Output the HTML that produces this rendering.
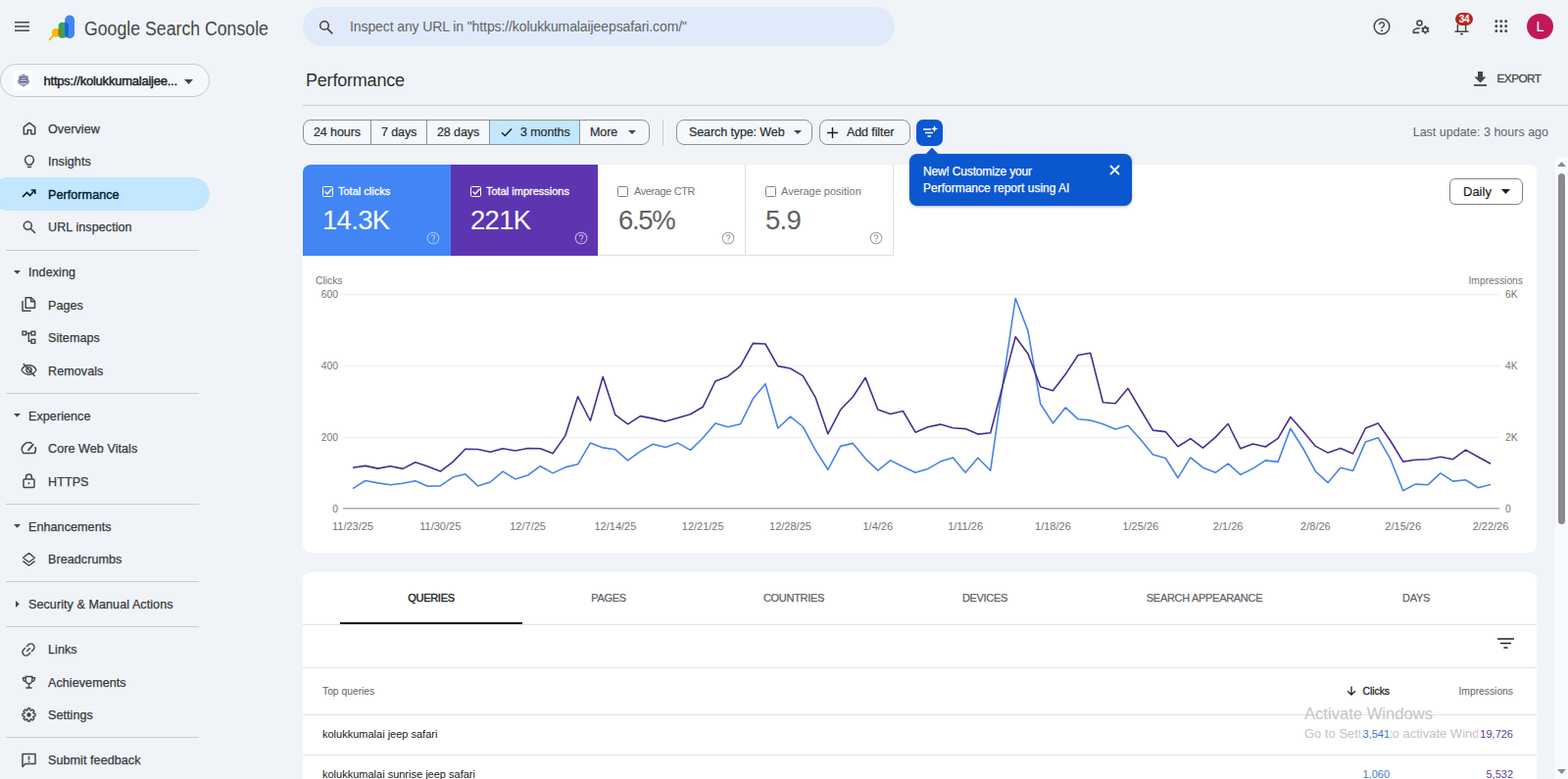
<!DOCTYPE html>
<html lang="en">
<head>
<meta charset="utf-8">
<title>Performance - Google Search Console</title>
<style>
*{box-sizing:border-box;margin:0;padding:0}
html,body{width:1600px;height:795px;overflow:hidden}
body{background:#f0f4f9;font-family:"Liberation Sans",Arial,sans-serif;color:#1f1f1f;position:relative;font-size:13px}
.abs{position:absolute}
.t{position:absolute;white-space:nowrap;line-height:1}
svg{position:absolute;overflow:visible}
/* header */
#brand{left:86px;top:18.800px;font-size:20px;color:#444746;letter-spacing:0;transform-origin:0 0;transform:scaleX(0.885)}
#search{left:309px;top:7px;width:604px;height:40px;border-radius:20px;background:#e0eafa}
#search .t{left:48px;top:13px;font-size:14px;color:#5f6368;letter-spacing:-0.1px}
#avatar{left:1558.200px;top:13.500px;width:26.500px;height:26.500px;border-radius:50%;background:#c2185b;color:#fff;font-size:14.500px;text-align:center;line-height:27px}
#badge{left:1485px;top:13px;width:18px;height:13px;border-radius:7px;background:#b3261e;color:#fff;font-size:10px;font-weight:bold;text-align:center;line-height:13px;letter-spacing:-0.4px}
/* sidebar */
#prop{left:0;top:65px;width:214px;height:34px;border:1px solid #c4c9d0;border-radius:17px;background:#f4f7fc}
#prop .t{left:43.500px;top:10px;font-size:13px;color:#1f1f1f;letter-spacing:-0.230px;-webkit-text-stroke:0.450px #1f1f1f}
.nav{position:absolute;left:49px;font-size:12.600px;color:#36393c;white-space:nowrap;line-height:1;letter-spacing:0.050px;-webkit-text-stroke:0.250px #36393c;margin-top:0.500px}
.grp{position:absolute;left:29px;font-size:12.600px;color:#36393c;white-space:nowrap;line-height:1;letter-spacing:0.050px;-webkit-text-stroke:0.250px #36393c;margin-top:0.500px}
.sep{position:absolute;left:6px;width:197px;height:1px;background:#c9ccd1}
#active{left:-9px;top:181px;width:222.500px;height:34px;border-radius:17px;background:#c2e7ff}
</style>
</head>
<body>

<!-- ===== HEADER ===== -->
<svg class="abs" style="left:15px;top:22px" width="15" height="10" viewBox="0 0 15 10"><path d="M0 0.800h15M0 5h15M0 9.200h15" stroke="#444746" stroke-width="1.600" fill="none"/></svg>
<svg class="abs" style="left:50px;top:15px" width="28" height="28" viewBox="0 0 28 28">
  <path d="M4.400 21.300L0.600 25.400" stroke="#fbbc04" stroke-width="2" stroke-linecap="round"/>
  <circle cx="7.400" cy="18.300" r="4.500" fill="#fbbc04"/>
  <rect x="9.700" y="7.800" width="8" height="16.300" rx="3.800" fill="#34a853"/>
  <path d="M9.700 14.430A4.500 4.500 0 0 1 9.700 22.170z" fill="#ea4335"/>
  <rect x="16.200" y="0.500" width="9.800" height="23.700" rx="4.800" fill="#4285f4"/>
  <path d="M16.200 7.800A3.800 3.800 0 0 1 19.900 11.600V20.300A3.800 3.800 0 0 1 18.300 23.400A4.800 4.800 0 0 1 16.200 19.400z" fill="#1a67d2"/>
</svg>
<div class="t" id="brand">Google Search Console</div>
<div class="abs" id="search">
  <svg style="left:16px;top:12.500px" width="15.500" height="15.500" viewBox="0 0 18 18"><circle cx="7" cy="7" r="5" stroke="#444746" stroke-width="1.8" fill="none"/><path d="M10.8 10.8L16 16" stroke="#444746" stroke-width="2" stroke-linecap="round"/></svg>
  <div class="t">Inspect any URL in "https://kolukkumalaijeepsafari.com/"</div>
</div>

<!-- header right icons -->
<svg class="abs" style="left:1401px;top:18px" width="18" height="18" viewBox="0 0 18 18"><circle cx="9" cy="9" r="7.8" stroke="#444746" stroke-width="1.5" fill="none"/><path d="M6.6 7.2a2.4 2.4 0 1 1 3.6 2.1c-.8.5-1.2.9-1.2 1.8" stroke="#444746" stroke-width="1.5" fill="none"/><circle cx="9" cy="13.2" r="1" fill="#444746"/></svg>
<svg class="abs" style="left:1441px;top:19px" width="19" height="16" viewBox="0 0 19 16"><circle cx="7.500" cy="4.500" r="2.500" stroke="#444746" stroke-width="1.600" fill="none"/><path d="M7.800 9.700C4 9.700 1.300 11 1.300 13v1.400h6" stroke="#444746" stroke-width="1.600" fill="none" stroke-linejoin="round"/><path d="M12.24 8.53L12.43 7.21L14.37 7.21L14.56 8.53L15.31 8.96L16.54 8.47L17.51 10.14L16.47 10.97L16.47 11.83L17.51 12.66L16.54 14.33L15.31 13.84L14.56 14.27L14.37 15.59L12.43 15.59L12.24 14.27L11.49 13.84L10.26 14.33L9.29 12.66L10.33 11.83L10.33 10.97L9.29 10.14L10.26 8.47L11.49 8.96zM13.400 9.900a1.500 1.500 0 1 0 0 3a1.500 1.500 0 1 0 0-3z" fill="#444746" fill-rule="evenodd"/></svg>
<svg class="abs" style="left:1483.500px;top:21.800px" width="15" height="14" viewBox="0 0 15 14"><path d="M3.400 10V3M11.600 10V4M0.500 10.300h14" stroke="#444746" stroke-width="1.500" fill="none"/><ellipse cx="7.500" cy="12.700" rx="1.700" ry="0.900" fill="#444746"/></svg>
<div class="abs" id="badge">34</div>
<svg class="abs" style="left:1524.800px;top:20.300px" width="13.500" height="13.500" viewBox="0 0 15 15" fill="#444746"><circle cx="2" cy="2" r="1.6"/><circle cx="7.5" cy="2" r="1.6"/><circle cx="13" cy="2" r="1.6"/><circle cx="2" cy="7.5" r="1.6"/><circle cx="7.5" cy="7.5" r="1.6"/><circle cx="13" cy="7.5" r="1.6"/><circle cx="2" cy="13" r="1.6"/><circle cx="7.5" cy="13" r="1.6"/><circle cx="13" cy="13" r="1.6"/></svg>
<div class="abs" id="avatar">L</div>

<!-- ===== SIDEBAR ===== -->
<div class="abs" id="prop">
  <div class="abs" style="left:12.600px;top:6.300px;width:19px;height:19.500px;background:#fff;border-radius:1px"></div>
  <svg style="left:15.500px;top:9.300px" width="14" height="14" viewBox="0 0 14 14"><path d="M7 0.300L9.500 2.200h2.200l0.300 3.300 1.300 2.700-1.500 2.600L9 12.300 7 13.700 5 12.300 2.200 10.800 0.700 8.200 2 5.500l0.300-3.300h2.200z" fill="#8e97b8"/><path d="M3.500 4.200h7M3 6.200h8M3.300 8.600h7.400" stroke="#4f5a80" stroke-width="1.100"/><path d="M4 10.300h6" stroke="#dfe3f0" stroke-width="0.900"/><path d="M4.500 5.200h5M4 7.400h6" stroke="#e6e9f4" stroke-width="0.800"/></svg>
  <div class="t">https://kolukkumalaijee...</div>
  <svg style="left:187px;top:14.500px" width="9" height="5" viewBox="0 0 9 5"><path d="M0 0h9L4.500 5z" fill="#444746"/></svg>
</div>
<div class="abs" id="active"></div>

<!-- sidebar icons -->

<svg class="abs" style="left:22px;top:123px" width="16" height="16" viewBox="0 0 16 16" fill="none" stroke="#444746" stroke-width="1.500" stroke-linejoin="round"><path d="M2.300 6.700L8 2.300l5.700 4.400v7H9.800V9.800H6.200v3.900H2.300z"/></svg>
<svg class="abs" style="left:22px;top:157px" width="16" height="16" viewBox="0 0 16 16" fill="none" stroke="#444746" stroke-width="1.500"><path d="M5.800 10.300C4.300 9.400 3.600 8 3.600 6.200a4.400 4.400 0 0 1 8.800 0c0 1.800-.700 3.200-2.200 4.100v.700H5.800z" stroke-linejoin="round"/><path d="M5.900 13.400h4.200"/></svg>
<svg class="abs" style="left:22px;top:190px" width="16" height="16" viewBox="0 0 16 16" fill="none" stroke="#001d35" stroke-width="1.600"><path d="M1 11l4.500-4.500 3 3 5-5.300"/><path d="M9.800 4h4v4"/></svg>
<svg class="abs" style="left:22px;top:224px" width="16" height="16" viewBox="0 0 16 16" fill="none" stroke="#444746" stroke-width="1.600"><circle cx="6.300" cy="6.300" r="4"/><path d="M9.300 9.300l4.200 4.200" stroke-linecap="round"/></svg>

<svg class="abs" style="left:14px;top:276px" width="7" height="4" viewBox="0 0 7 4"><path d="M0 0h7L3.500 3.800z" fill="#444746"/></svg>
<svg class="abs" style="left:21px;top:302px" width="17" height="17" viewBox="0 0 17 17" fill="none" stroke="#444746" stroke-width="1.500" stroke-linejoin="round"><path d="M5.200 1.800h5.600l3.700 3.700v6.800H5.200z"/><path d="M10.600 2v3.700h3.700"/><path d="M2 5v10.200h8.500"/></svg>
<svg class="abs" style="left:22px;top:337px" width="16" height="15" viewBox="0 0 16 15" fill="none" stroke="#444746" stroke-width="1.400"><rect x="1" y="1.200" width="3.600" height="3.600"/><rect x="10" y="1.200" width="3.800" height="3.800"/><rect x="10" y="9.400" width="3.800" height="3.800"/><path d="M4.600 3h5.400M7.300 3v8.300H10"/></svg>
<svg class="abs" style="left:21px;top:370px" width="17" height="15" viewBox="0 0 17 15" fill="none" stroke="#444746" stroke-width="1.400"><path d="M1 7.500C2.500 4.500 5.200 2.800 8.500 2.800s6 1.700 7.500 4.700c-1.500 3-4.200 4.700-7.500 4.700S2.500 10.500 1 7.500z"/><circle cx="8.500" cy="7.500" r="2.600"/><path d="M2.800 1l11.800 13" stroke-width="1.500"/></svg>

<svg class="abs" style="left:14px;top:422px" width="7" height="4" viewBox="0 0 7 4"><path d="M0 0h7L3.500 3.800z" fill="#444746"/></svg>
<svg class="abs" style="left:21px;top:450px" width="17" height="15" viewBox="0 0 17 15" fill="none" stroke="#444746" stroke-width="1.500"><path d="M11.800 2.700A6.800 6.800 0 0 0 2.700 12.400h11.600a6.800 6.800 0 0 0 .6-6.400" stroke-linejoin="round"/><path d="M8 9.300l4.800-5.600" stroke-width="1.800" stroke-linecap="round"/></svg>
<svg class="abs" style="left:23px;top:483px" width="13" height="16" viewBox="0 0 13 16" fill="none" stroke="#444746" stroke-width="1.500"><rect x="1" y="6" width="11" height="8.600" rx="1"/><path d="M3.600 6V4a2.900 2.900 0 0 1 5.800 0v2"/><circle cx="6.500" cy="10.300" r="1" fill="#444746" stroke="none"/></svg>

<svg class="abs" style="left:14px;top:535px" width="7" height="4" viewBox="0 0 7 4"><path d="M0 0h7L3.500 3.800z" fill="#444746"/></svg>
<svg class="abs" style="left:22px;top:563px" width="15" height="15" viewBox="0 0 15 15" fill="none" stroke="#444746" stroke-width="1.400" stroke-linejoin="round"><path d="M7.500 1.600l6 4.600-6 4.600-6-4.600z"/><path d="M1.500 9.600l6 4.600 6-4.600"/></svg>

<svg class="abs" style="left:16px;top:613px" width="4" height="7" viewBox="0 0 4 7"><path d="M0 0v7L3.800 3.500z" fill="#444746"/></svg>

<svg class="abs" style="left:20.900px;top:654.900px" width="16" height="16" viewBox="0 0 16 16" fill="none" stroke="#444746" stroke-width="2.100"><g transform="translate(8 8) rotate(-45) scale(0.710) translate(-12 -12)"><path d="M11 7H7a5 5 0 0 0 0 10h4M13 7h4a5 5 0 0 1 0 10h-4M8.500 12h7"/></g></svg>
<svg class="abs" style="left:22px;top:689px" width="15" height="15" viewBox="0 0 15 15" fill="none" stroke="#444746" stroke-width="1.400"><path d="M4.200 1.500h6.600v3.800a3.300 3.300 0 0 1-6.600 0z"/><path d="M4.200 2.700H1.500v1a2.700 2.700 0 0 0 2.900 2.700M10.800 2.700h2.700v1a2.700 2.700 0 0 1-2.900 2.700"/><path d="M7.500 8.600v3.800M4.300 13h6.400" stroke-width="1.500"/></svg>
<svg class="abs" style="left:22px;top:722px" width="15" height="15" viewBox="0 0 15 15" fill="none" stroke="#444746" stroke-width="1.400" stroke-linejoin="round"><path d="M6.15 2.79L6.24 1.02L8.76 1.02L8.85 2.79L9.88 3.21L11.19 2.03L12.97 3.81L11.79 5.12L12.21 6.15L13.98 6.24L13.98 8.76L12.21 8.85L11.79 9.88L12.97 11.19L11.19 12.97L9.88 11.79L8.85 12.21L8.76 13.98L6.24 13.98L6.15 12.21L5.12 11.79L3.81 12.97L2.03 11.19L3.21 9.88L2.79 8.85L1.02 8.76L1.02 6.24L2.79 6.15L3.21 5.12L2.03 3.81L3.81 2.03L5.12 3.21z"/><circle cx="7.500" cy="7.500" r="2.200" fill="#444746" stroke="none"/></svg>
<svg class="abs" style="left:22px;top:767.500px" width="15" height="16" viewBox="0 0 15 16" fill="none" stroke="#444746" stroke-width="1.500" stroke-linejoin="round"><path d="M1 1.500h13v10H4L1 14.500z"/><path d="M7.500 3.700v3.800" stroke-width="1.600"/><circle cx="7.500" cy="9.300" r=".9" fill="#444746" stroke="none"/></svg>



<div class="nav" style="top:125px">Overview</div>
<div class="nav" style="top:158px">Insights</div>
<div class="nav" style="top:192px;color:#001d35;-webkit-text-stroke:0.4px #001d35">Performance</div>
<div class="nav" style="top:225px">URL inspection</div>
<div class="sep" style="top:255px"></div>
<div class="grp" style="top:271px">Indexing</div>
<div class="nav" style="top:305px">Pages</div>
<div class="nav" style="top:338px">Sitemaps</div>
<div class="nav" style="top:372px">Removals</div>
<div class="sep" style="top:401px"></div>
<div class="grp" style="top:418px">Experience</div>
<div class="nav" style="top:451px">Core Web Vitals</div>
<div class="nav" style="top:485px">HTTPS</div>
<div class="sep" style="top:514px"></div>
<div class="grp" style="top:531px">Enhancements</div>
<div class="nav" style="top:564px">Breadcrumbs</div>
<div class="sep" style="top:593px"></div>
<div class="grp" style="top:610px">Security &amp; Manual Actions</div>
<div class="sep" style="top:639px"></div>
<div class="nav" style="top:656px">Links</div>
<div class="nav" style="top:690px">Achievements</div>
<div class="nav" style="top:723px">Settings</div>
<div class="sep" style="top:752px"></div>
<div class="nav" style="top:769px">Submit feedback</div>

<!-- ===== MAIN ===== -->
<style>
#title{left:312px;top:73px;font-size:18px;color:#303134;letter-spacing:-0.2px}
#export{left:1527.500px;top:75px;font-size:11.800px;color:#444746;letter-spacing:-0.55px;-webkit-text-stroke:0.3px #444746}
#hr{left:309px;top:107px;width:1291px;height:1px;background:#c9ccd1}
#seg{left:309px;top:121.700px;width:354px;height:26.600px;border:1px solid #8e918f;border-radius:8px;overflow:hidden;background:#f4f7fc}
#seg div.c{position:absolute;top:0;height:25px;border-left:1px solid #8e918f}
.chip{position:absolute;top:121.700px;height:26.600px;border:1px solid #8e918f;border-radius:8px;background:#f4f7fc}
.ft{position:absolute;white-space:nowrap;line-height:1;font-size:12.5px;color:#2b2e31;top:129.300px;letter-spacing:-0.1px;-webkit-text-stroke:0.2px #2b2e31}
#last{right:20px;top:128.500px;font-size:12.500px;color:#5f6368}
#card1{left:308.700px;top:168px;width:1259px;height:395.500px;background:#fff;border-radius:8px}
.tile{position:absolute;top:168.400px;height:92.300px}
.tl{position:absolute;white-space:nowrap;line-height:1;font-size:11px;top:190px}
.tv{position:absolute;white-space:nowrap;line-height:1;font-size:27.5px;top:211px;letter-spacing:-0.7px}
.cb{position:absolute;top:190px;width:11px;height:11px;border-radius:1.5px}
#tip{left:928px;top:157px;width:227px;height:53.300px;border-radius:8px;background:#0b57d0;box-shadow:0 1px 3px rgba(0,0,0,.3)}
#tip .t{left:14px;font-size:12px;color:#fff;letter-spacing:0px;-webkit-text-stroke:0.25px #fff}
#daily{left:1479px;top:181.800px;width:75px;height:27px;border:1.200px solid #808382;border-radius:6px}
</style>
<div class="t" id="title">Performance</div>
<svg class="abs" style="left:1504px;top:73px" width="13" height="15" viewBox="0 0 13 15"><path d="M4 0h5v5.500h3.500L6.500 11.500 0.500 5.500H4z" fill="#444746"/><path d="M0 14h13" stroke="#444746" stroke-width="1.8"/></svg>
<div class="t" id="export">EXPORT</div>
<div class="abs" id="hr"></div>

<!-- filter row -->
<div class="abs" id="seg">
  <div class="abs" style="left:189px;top:0;width:93px;height:25px;background:#c2e7ff"></div>
  <div class="c" style="left:68px"></div><div class="c" style="left:125px"></div><div class="c" style="left:189px"></div><div class="c" style="left:281px"></div>
</div>
<div class="ft" style="left:320px">24 hours</div>
<div class="ft" style="left:389px">7 days</div>
<div class="ft" style="left:446px">28 days</div>
<svg class="abs" style="left:511px;top:130px" width="12" height="10" viewBox="0 0 12 10"><path d="M1 5.200L4.300 8.500 11 1.500" stroke="#1f1f1f" stroke-width="1.5" fill="none"/></svg>
<div class="ft" style="left:531px">3 months</div>
<div class="ft" style="left:602px">More</div>
<svg class="abs" style="left:641px;top:133px" width="8" height="4" viewBox="0 0 8 4"><path d="M0 0h8L4 4z" fill="#444746"/></svg>
<div class="abs" style="left:676px;top:122px;width:1px;height:27px;background:#c9ccd1"></div>
<div class="chip" style="left:690px;width:139px"></div>
<div class="ft" style="left:703px">Search type: Web</div>
<svg class="abs" style="left:810px;top:133px" width="8" height="4" viewBox="0 0 8 4"><path d="M0 0h8L4 4z" fill="#444746"/></svg>
<div class="chip" style="left:836px;width:93px"></div>
<svg class="abs" style="left:844px;top:130px" width="11" height="11" viewBox="0 0 11 11"><path d="M5.500 0v11M0 5.500h11" stroke="#1f1f1f" stroke-width="1.4"/></svg>
<div class="ft" style="left:864px">Add filter</div>
<div class="abs" style="left:935px;top:122px;width:27px;height:27px;border-radius:7px;background:#0b57d0"></div>
<svg class="abs" style="left:942px;top:128px" width="15" height="14" viewBox="0 0 15 14"><path d="M0 4h8M2 7.500h8M4.500 11h3.500" stroke="#fff" stroke-width="1.5"/><path d="M11.500 0l1 2.500 2.500 1-2.500 1-1 2.500-1-2.500-2.500-1 2.500-1z" fill="#fff"/></svg>
<div class="t" id="last">Last update: 3 hours ago</div>

<!-- card 1 -->
<div class="abs" id="card1"></div>
<div class="tile" style="left:309px;width:151px;background:#4285f4;border-radius:8px 0 0 0"></div>
<div class="tile" style="left:460px;width:150.200px;background:#5e35b1"></div>
<div class="tile" style="left:610px;width:151px;border-right:1px solid #e0e0e0;border-bottom:1px solid #e0e0e0"></div>
<div class="tile" style="left:761px;width:151px;border-right:1px solid #e0e0e0;border-bottom:1px solid #e0e0e0"></div>

<div class="cb" style="left:329px;border:1.5px solid #fff"></div>
<svg class="abs" style="left:331px;top:192px" width="8" height="7" viewBox="0 0 8 7"><path d="M0.500 3.500L3 6 7.500 0.800" stroke="#fff" stroke-width="1.4" fill="none"/></svg>
<div class="tl" style="left:345px;color:#fff;-webkit-text-stroke:0.3px #fff">Total clicks</div>
<div class="tv" style="left:329px;color:#fff">14.3K</div>

<div class="cb" style="left:480px;border:1.5px solid #fff"></div>
<svg class="abs" style="left:482px;top:192px" width="8" height="7" viewBox="0 0 8 7"><path d="M0.500 3.500L3 6 7.500 0.800" stroke="#fff" stroke-width="1.4" fill="none"/></svg>
<div class="tl" style="left:496px;color:#fff;-webkit-text-stroke:0.3px #fff">Total impressions</div>
<div class="tv" style="left:480px;color:#fff">221K</div>

<div class="cb" style="left:630px;border:1px solid #80868b"></div>
<div class="tl" style="left:647px;color:#757575;letter-spacing:-0.400px">Average CTR</div>
<div class="tv" style="left:631px;color:#616161;letter-spacing:-1.300px">6.5%</div>

<div class="cb" style="left:781px;border:1px solid #80868b"></div>
<div class="tl" style="left:797px;color:#757575">Average position</div>
<div class="tv" style="left:781px;color:#616161">5.9</div>

<svg class="abs qm" style="left:435px;top:236px" width="14" height="14" viewBox="0 0 14 14"><circle cx="7" cy="7" r="5.800" stroke="#a8c7fa" stroke-width="1.100" fill="none"/><path d="M5.200 5.600a1.800 1.800 0 1 1 2.700 1.600c-.600.400-.900.700-.900 1.300" stroke="#a8c7fa" stroke-width="1.100" fill="none"/><circle cx="7" cy="10.200" r=".7" fill="#a8c7fa"/></svg>
<svg class="abs qm" style="left:586px;top:236px" width="14" height="14" viewBox="0 0 14 14"><circle cx="7" cy="7" r="5.800" stroke="#c5b3ec" stroke-width="1.100" fill="none"/><path d="M5.200 5.600a1.800 1.800 0 1 1 2.700 1.600c-.600.400-.900.700-.900 1.300" stroke="#c5b3ec" stroke-width="1.100" fill="none"/><circle cx="7" cy="10.200" r=".7" fill="#c5b3ec"/></svg>
<svg class="abs qm" style="left:736px;top:236px" width="14" height="14" viewBox="0 0 14 14"><circle cx="7" cy="7" r="5.800" stroke="#9e9e9e" stroke-width="1.100" fill="none"/><path d="M5.200 5.600a1.800 1.800 0 1 1 2.700 1.600c-.600.400-.900.700-.900 1.300" stroke="#9e9e9e" stroke-width="1.100" fill="none"/><circle cx="7" cy="10.200" r=".7" fill="#9e9e9e"/></svg>
<svg class="abs qm" style="left:887px;top:236px" width="14" height="14" viewBox="0 0 14 14"><circle cx="7" cy="7" r="5.800" stroke="#9e9e9e" stroke-width="1.100" fill="none"/><path d="M5.200 5.600a1.800 1.800 0 1 1 2.700 1.600c-.600.400-.900.700-.900 1.300" stroke="#9e9e9e" stroke-width="1.100" fill="none"/><circle cx="7" cy="10.200" r=".7" fill="#9e9e9e"/></svg>

<!-- tooltip -->
<svg class="abs" style="left:944px;top:150px" width="14" height="8" viewBox="0 0 14 8"><path d="M0 8L7 0.500 14 8z" fill="#0b57d0"/></svg>
<div class="abs" id="tip">
  <div class="t" style="top:12px;letter-spacing:-0.170px">New! Customize your</div>
  <div class="t" style="top:29px">Performance report using AI</div>
  <svg style="left:204px;top:11px" width="11" height="11" viewBox="0 0 11 11"><path d="M1 1l9 9M10 1l-9 9" stroke="#fff" stroke-width="1.800"/></svg>
</div>

<!-- daily -->
<div class="abs" id="daily"></div>
<div class="t" style="left:1493px;top:189px;font-size:13px;color:#1f1f1f;-webkit-text-stroke:0.2px #1f1f1f">Daily</div>
<svg class="abs" style="left:1532px;top:193px" width="9" height="5" viewBox="0 0 9 5"><path d="M0 0h9L4.500 5z" fill="#1f1f1f"/></svg>

<!-- chart -->
<svg class="abs" style="left:0;top:0" width="1600" height="795" viewBox="0 0 1600 795" font-family="Liberation Sans, Arial, sans-serif" font-size="10.300" fill="#757575">
<path d="M350 300.500H1530M350 373.500H1530M350 446.500H1530" stroke="#eeeeee" stroke-width="1"/>
<path d="M350 518.800H1530" stroke="#9e9e9e" stroke-width="1.200"/>
<text x="322" y="290.400">Clicks</text>
<text x="345" y="304.300" text-anchor="end">600</text>
<text x="345" y="377.300" text-anchor="end">400</text>
<text x="345" y="450.300" text-anchor="end">200</text>
<text x="345" y="523.300" text-anchor="end">0</text>
<text x="1554" y="290" text-anchor="end">Impressions</text>
<text x="1536" y="304">6K</text>
<text x="1536" y="377">4K</text>
<text x="1536" y="450">2K</text>
<text x="1536" y="523">0</text>
<text x="360.0" y="541" font-size="11" text-anchor="middle">11/23/25</text><text x="449.3" y="541" font-size="11" text-anchor="middle">11/30/25</text><text x="538.6" y="541" font-size="11" text-anchor="middle">12/7/25</text><text x="627.9" y="541" font-size="11" text-anchor="middle">12/14/25</text><text x="717.2" y="541" font-size="11" text-anchor="middle">12/21/25</text><text x="806.5" y="541" font-size="11" text-anchor="middle">12/28/25</text><text x="895.8" y="541" font-size="11" text-anchor="middle">1/4/26</text><text x="985.1" y="541" font-size="11" text-anchor="middle">1/11/26</text><text x="1074.4" y="541" font-size="11" text-anchor="middle">1/18/26</text><text x="1163.8" y="541" font-size="11" text-anchor="middle">1/25/26</text><text x="1253.1" y="541" font-size="11" text-anchor="middle">2/1/26</text><text x="1342.4" y="541" font-size="11" text-anchor="middle">2/8/26</text><text x="1431.7" y="541" font-size="11" text-anchor="middle">2/15/26</text><text x="1521.0" y="541" font-size="11" text-anchor="middle">2/22/26</text>
<polyline points="360.0,498.6 372.8,490.5 385.5,492.9 398.3,494.7 411.0,493.2 423.8,490.8 436.5,496.2 449.3,495.9 462.1,487.1 474.8,483.8 487.6,495.9 500.3,492.0 513.1,481.1 525.9,488.9 538.6,485.0 551.4,475.7 564.1,482.9 576.9,476.9 589.6,473.8 602.4,452.1 615.2,456.9 627.9,458.8 640.7,469.9 653.4,460.6 666.2,453.3 679.0,456.6 691.7,452.1 704.5,459.4 717.2,447.0 730.0,431.9 742.7,435.8 755.5,432.8 768.3,407.1 781.0,391.7 793.8,437.0 806.5,425.2 819.3,435.5 832.0,459.1 844.8,479.3 857.6,455.4 870.3,452.4 883.1,468.1 895.8,480.2 908.6,469.9 921.4,476.3 934.1,482.3 946.9,478.4 959.6,471.1 972.4,466.9 985.1,482.3 997.9,467.2 1010.7,480.2 1023.4,391.1 1036.2,304.5 1048.9,337.4 1061.7,412.3 1074.4,431.9 1087.2,415.9 1100.0,427.7 1112.7,428.9 1125.5,432.8 1138.2,437.9 1151.0,434.3 1163.8,448.5 1176.5,463.9 1189.3,467.5 1202.0,487.7 1214.8,466.9 1227.5,477.2 1240.3,482.3 1253.1,473.2 1265.8,484.4 1278.6,478.1 1291.3,469.9 1304.1,471.4 1316.8,437.3 1329.6,457.5 1342.4,481.1 1355.1,492.6 1367.9,477.2 1380.6,480.5 1393.4,450.9 1406.2,446.7 1418.9,468.7 1431.7,500.7 1444.4,494.1 1457.2,494.7 1469.9,482.9 1482.7,491.1 1495.5,489.8 1508.2,497.7 1521.0,494.4" fill="none" stroke="#4684e8" stroke-width="1.600" stroke-linejoin="round"/>
<polyline points="360.0,477.2 372.8,475.4 385.5,478.1 398.3,475.7 411.0,478.4 423.8,471.7 436.5,476.0 449.3,481.1 462.1,471.4 474.8,458.2 487.6,458.5 500.3,461.2 513.1,457.8 525.9,460.0 538.6,457.5 551.4,457.8 564.1,462.7 576.9,444.6 589.6,404.7 602.4,429.5 615.2,384.5 627.9,423.4 640.7,432.8 653.4,424.6 666.2,427.1 679.0,430.1 691.7,426.5 704.5,422.8 717.2,415.3 730.0,389.0 742.7,384.2 755.5,373.6 768.3,350.4 781.0,351.0 793.8,373.6 806.5,376.0 819.3,383.6 832.0,405.3 844.8,442.8 857.6,418.3 870.3,405.0 883.1,385.4 895.8,418.0 908.6,422.5 921.4,419.5 934.1,441.2 946.9,435.8 959.6,433.1 972.4,436.7 985.1,437.6 997.9,443.1 1010.7,441.8 1023.4,392.6 1036.2,343.7 1048.9,360.9 1061.7,394.8 1074.4,398.7 1087.2,382.1 1100.0,362.5 1112.7,360.3 1125.5,410.8 1138.2,411.7 1151.0,396.3 1163.8,418.0 1176.5,439.1 1189.3,440.6 1202.0,455.7 1214.8,447.6 1227.5,457.2 1240.3,446.1 1253.1,432.5 1265.8,457.8 1278.6,453.0 1291.3,456.0 1304.1,447.3 1316.8,425.5 1329.6,440.0 1342.4,455.4 1355.1,462.1 1367.9,457.5 1380.6,463.0 1393.4,437.0 1406.2,431.9 1418.9,450.0 1431.7,471.1 1444.4,469.3 1457.2,468.7 1469.9,466.3 1482.7,468.7 1495.5,459.1 1508.2,466.3 1521.0,473.2" fill="none" stroke="#4a2c92" stroke-width="1.600" stroke-linejoin="round"/>
</svg>

<!-- ===== card 2 : table ===== -->
<style>
#card2{left:308.700px;top:584px;width:1259px;height:240px;background:#fff;border-radius:8px 8px 0 0}
.tab{position:absolute;top:604.500px;font-size:11px;color:#5f6368;white-space:nowrap;line-height:1;transform:translateX(-50%);letter-spacing:-0.3px;-webkit-text-stroke:0.25px #5f6368}
.ln{position:absolute;left:309px;width:1259px;height:1px;background:#e4e4e4}
.th{position:absolute;white-space:nowrap;line-height:1;font-size:10.300px;color:#5f6368;top:700.700px}
.td{position:absolute;white-space:nowrap;line-height:1;font-size:11px;color:#212121}
.wm{position:absolute;white-space:nowrap;line-height:1;color:#c4c4c4}
#sbtrack{left:1587px;top:160px;width:13px;height:635px;background:#f8fafd}
#sbthumb{left:1590px;top:177px;width:7px;height:358px;border-radius:4px;background:#8a8a8a}
</style>
<div class="abs" id="card2"></div>
<div class="tab" style="left:440px;color:#1f1f1f;-webkit-text-stroke:0.4px #1f1f1f">QUERIES</div>
<div class="tab" style="left:621px">PAGES</div>
<div class="tab" style="left:810px">COUNTRIES</div>
<div class="tab" style="left:1005px">DEVICES</div>
<div class="tab" style="left:1229px">SEARCH APPEARANCE</div>
<div class="tab" style="left:1445px">DAYS</div>
<div class="abs" style="left:347px;top:635px;width:186px;height:2px;background:#1f1f1f"></div>
<div class="ln" style="top:637px"></div>
<svg class="abs" style="left:1528px;top:651px" width="17" height="11" viewBox="0 0 17 11"><path d="M0 1h17M3 5.500h11M6.500 10h4" stroke="#1f1f1f" stroke-width="1.600"/></svg>
<div class="ln" style="top:681px"></div>
<div class="th" style="left:329px">Top queries</div>
<svg class="abs" style="left:1374px;top:700px" width="10" height="10" viewBox="0 0 10 10"><path d="M5 0.500v8M1.200 5.200L5 9l3.800-3.800" stroke="#1f1f1f" stroke-width="1.300" fill="none"/></svg>
<div class="th" style="right:182px;color:#1f1f1f;-webkit-text-stroke:0.3px #1f1f1f">Clicks</div>
<div class="th" style="right:56px">Impressions</div>
<div class="ln" style="top:729px"></div>

<div class="wm" style="left:1331px;top:721px;font-size:16.600px">Activate Windows</div>
<div class="wm" style="left:1331px;top:742px;font-size:13px">Go to Settings to activate Windows.</div>

<div class="td" style="left:329px;top:743.500px">kolukkumalai jeep safari</div>
<div class="td" style="right:181px;top:742.500px;color:#3d7bc2;background:rgba(255,255,255,.82);padding:1px 1px 1px 2px">3,541</div>
<div class="td" style="right:55px;top:742.500px;color:#673a9e;background:rgba(255,255,255,.82);padding:1px 1px 1px 2px">19,726</div>
<div class="ln" style="top:770px"></div>
<div class="td" style="left:329px;top:784.500px">kolukkumalai sunrise jeep safari</div>
<div class="td" style="right:182px;top:784.500px;color:#3d7bc2">1,060</div>
<div class="td" style="right:56px;top:784.500px;color:#673a9e">5,532</div>

<!-- scrollbar -->
<div class="abs" id="sbtrack"></div>
<svg class="abs" style="left:1589px;top:165px" width="9" height="5" viewBox="0 0 9 5"><path d="M0 5h9L4.500 0z" fill="#8a8a8a"/></svg>
<div class="abs" id="sbthumb"></div>
<svg class="abs" style="left:1589px;top:785px" width="9" height="5" viewBox="0 0 9 5"><path d="M0 0h9L4.500 5z" fill="#8a8a8a"/></svg>




</body>
</html>
